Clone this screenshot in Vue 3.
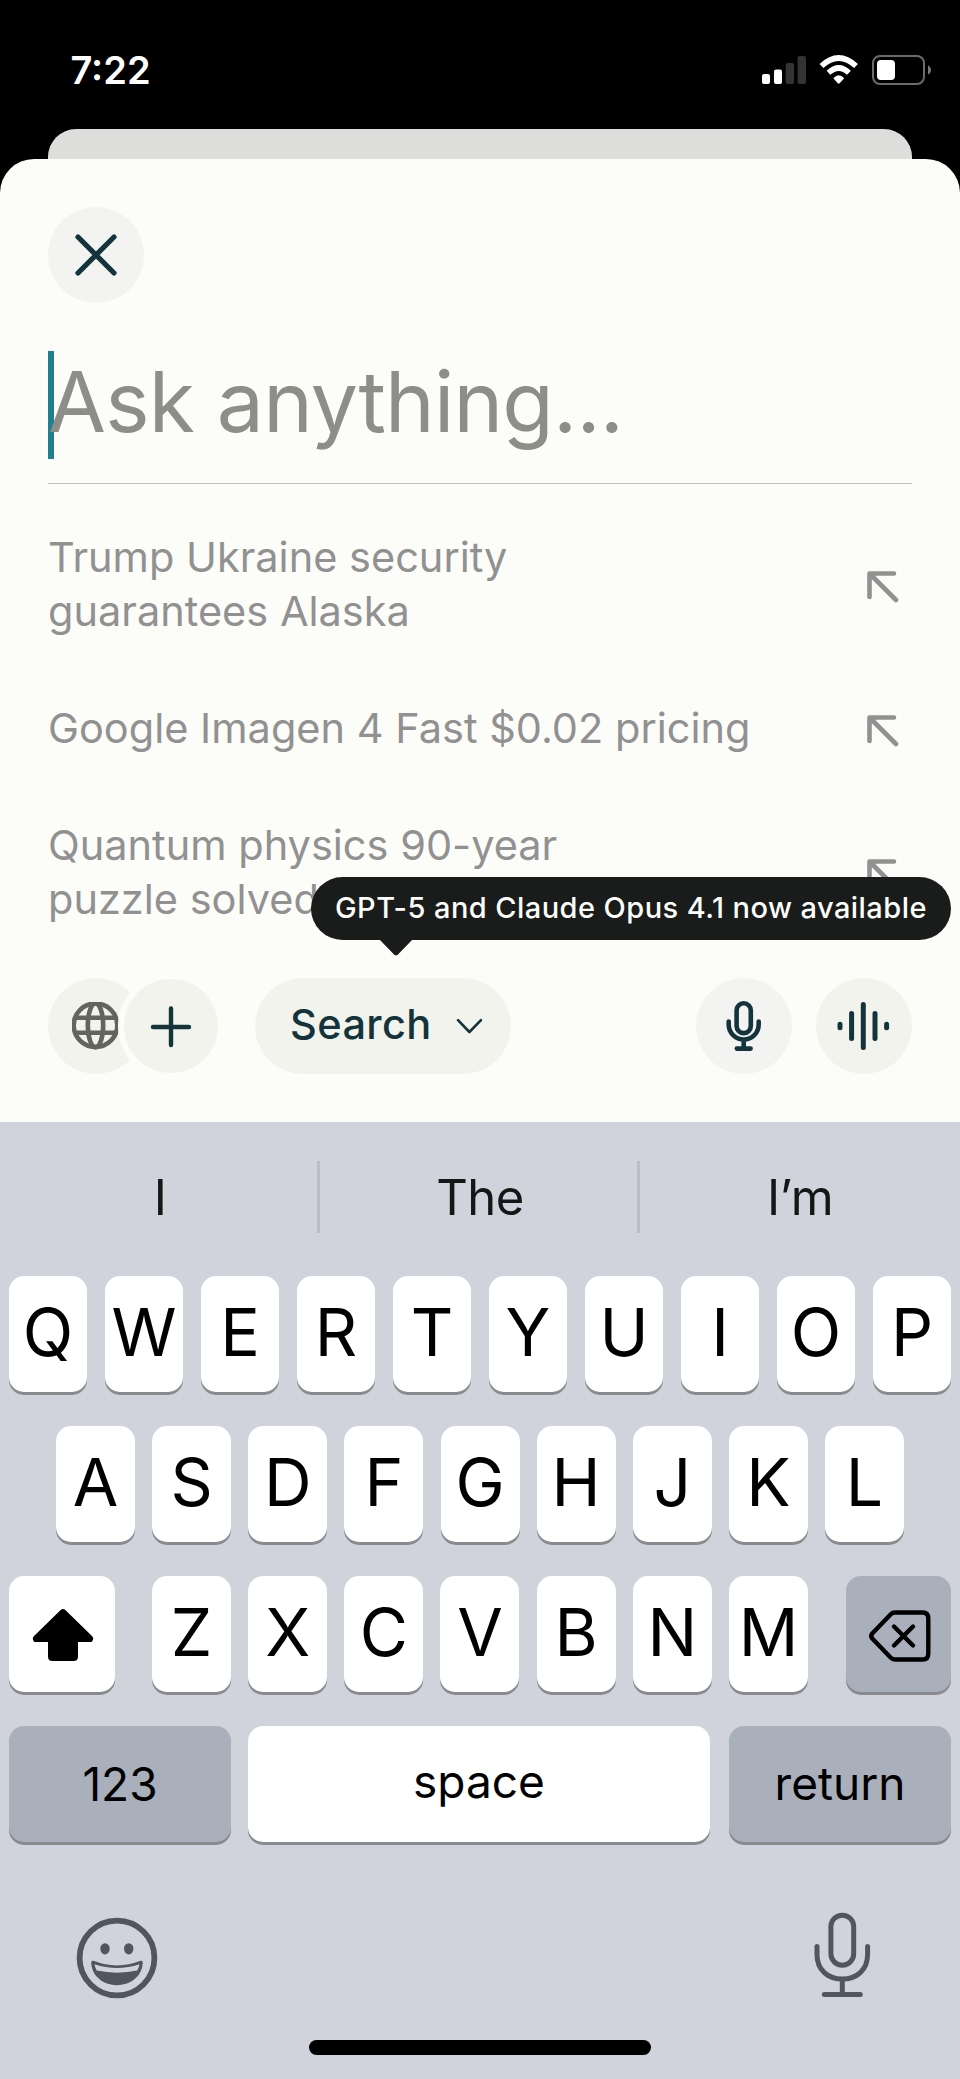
<script setup>
const suggestions = [
  ['Trump Ukraine security', 'guarantees Alaska'],
  ['Google Imagen 4 Fast $0.02 pricing'],
  ['Quantum physics 90-year', 'puzzle solved'],
]
const predictions = ['I', 'The', 'I’m']
const topRow = 'QWERTYUIOP'.split('')
const homeRow = 'ASDFGHJKL'.split('')
const bottomRow = 'ZXCVBNM'.split('')
</script>

<template>
  <div class="phone">
    <header class="status">
      <span class="time">7:22</span>
      <svg class="status-icons" width="172" height="32" viewBox="0 0 172 32">
        <g fill="#fff">
          <rect x="2" y="20" width="8" height="10" rx="2" />
          <rect x="14" y="15.5" width="8" height="14.5" rx="2" />
        </g>
        <g fill="#333">
          <rect x="25.7" y="9" width="8.4" height="21" rx="2" />
          <rect x="37.6" y="2" width="8.4" height="28" rx="2" />
        </g>
        <g fill="none" stroke="#fff" stroke-width="5.6">
          <path d="M61.5 12 Q78.7 -4 96 12" />
          <path d="M68.5 18.7 Q78.7 9.3 89 18.7" />
        </g>
        <path d="M73.3 24.2 Q78.7 18.2 84.2 24.2 L79.6 29.3 Q78.7 30.2 77.8 29.3 Z" fill="#fff" />
        <rect x="113" y="2" width="51" height="28" rx="7" fill="none" stroke="#6b6b6b" stroke-width="2" />
        <rect x="117" y="6" width="18" height="20" rx="4" fill="#fff" />
        <path d="M168 11.5 Q171 13 171 16 Q171 19 168 20.5 Z" fill="#777" />
      </svg>
    </header>
    <div class="back-sheet"></div>

    <main class="sheet">
      <button class="round neutral">
        <svg width="48" height="48" viewBox="0 0 48 48" class="dark" stroke-width="5.2">
          <path d="M6 6 L42 42 M42 6 L6 42" />
        </svg>
      </button>

      <div class="prompt">
        <span class="caret"></span>
        <span class="placeholder">Ask anything...</span>
      </div>

      <ul class="list">
        <li v-for="(lines, i) in suggestions" :key="i">
          <span class="suggestion">
            <span v-for="line in lines" :key="line">{{ line }}</span>
          </span>
          <svg class="arrow" width="32" height="32" viewBox="0 0 32 32">
            <path d="M2.5 26 V2.5 H27 M3 3 L29 29" />
          </svg>
        </li>
      </ul>

      <div class="toolbar">
        <button class="round soft">
          <svg width="48" height="48" viewBox="0 0 48 48" fill="none" stroke="#64645d" stroke-width="4.6">
            <circle cx="23.5" cy="23.3" r="21.8" />
            <ellipse cx="23.5" cy="23.3" rx="7.7" ry="21.8" />
            <path d="M3.5 15.8 H43.5 M3.5 30.8 H43.5" />
          </svg>
        </button>
        <button class="round soft plus">
          <svg width="48" height="48" viewBox="0 0 48 48" class="dark" stroke-width="4.4">
            <path d="M24 6.5 V43 M6 25 H42" />
          </svg>
        </button>
        <button class="pill">
          <span>Search</span>
          <svg width="28" height="18" viewBox="0 0 28 18" class="dark" stroke-width="2.6">
            <path d="M3 3.2 L14.4 15 L26 3.2" />
          </svg>
        </button>
        <button class="round neutral mic">
          <svg width="40" height="54" viewBox="0 0 40 54" class="dark" stroke-width="4.6">
            <rect x="12.6" y="4.3" width="14.2" height="29.8" rx="7.1" />
            <path d="M4.7 22.5 V25.5 A15 15 0 0 0 34.7 25.5 V22.5 M19.7 41 V49 M12.8 49.6 H26.6" />
          </svg>
        </button>
        <button class="round soft">
          <svg width="54" height="50" viewBox="0 0 54 50" class="dark" stroke-width="5">
            <path d="M3 23.2 V26.8 M14.6 12.5 V37.5 M26.3 3.5 V46.5 M38 12.5 V37.5 M49.6 23.2 V26.8" />
          </svg>
        </button>

        <div class="tooltip">
          GPT-5 and Claude Opus 4.1 now available
          <svg class="tip" width="34" height="17" viewBox="0 0 34 17">
            <path d="M0 0 H34 L19 15.4 Q17 17.2 15 15.4 Z" fill="#1a1c1b" />
          </svg>
        </div>
      </div>
    </main>

    <section class="keyboard">
      <div class="predictions">
        <span v-for="word in predictions" :key="word">{{ word }}</span>
      </div>
      <div class="keys">
        <div class="row">
          <kbd v-for="k in topRow" :key="k">{{ k }}</kbd>
        </div>
        <div class="row home">
          <kbd v-for="k in homeRow" :key="k">{{ k }}</kbd>
        </div>
        <div class="row">
          <kbd class="shift">
            <svg width="62" height="54" viewBox="0 0 62 54">
              <path d="M28.4 2.2 Q31 0 33.6 2.2 L60.2 28.2 Q62.5 31.2 59.6 34 H46 V48.5 Q46 53 41.5 53 H20.5 Q16 53 16 48.5 V34 H2.4 Q-0.5 31.2 1.8 28.2 Z" />
            </svg>
          </kbd>
          <div class="row letters">
            <kbd v-for="k in bottomRow" :key="k">{{ k }}</kbd>
          </div>
          <kbd class="grey delete">
            <svg width="62" height="52" viewBox="0 0 62 52" fill="none" stroke="#000" stroke-width="4.4" stroke-linecap="round" stroke-linejoin="round">
              <path d="M26 2.5 H53.5 Q59.3 2.5 59.3 8.3 V43.7 Q59.3 49.5 53.5 49.5 H26 Q23.5 49.5 21.8 47.8 L3.5 28.8 Q1 26 3.5 23.2 L21.8 4.2 Q23.5 2.5 26 2.5 Z" />
              <path d="M25 16.5 L44 35.5 M44 16.5 L25 35.5" />
            </svg>
          </kbd>
        </div>
        <div class="row wide">
          <kbd class="grey side">123</kbd>
          <kbd class="space">space</kbd>
          <kbd class="grey side return">return</kbd>
        </div>
      </div>
      <div class="footer">
        <svg class="emoji" width="82" height="82" viewBox="0 0 82 82">
          <circle cx="41" cy="41" r="37.4" fill="none" stroke="#51555e" stroke-width="5.8" />
          <ellipse cx="29" cy="31.8" rx="4.7" ry="5.6" fill="#51555e" />
          <ellipse cx="52.7" cy="31.8" rx="4.7" ry="5.6" fill="#51555e" />
          <path d="M17.5 43.8 Q41 53 64.5 43.8 Q67 43 66.8 46 C64.5 75.5 17.5 75.5 15.2 46 Q15 43 17.5 43.8 Z" fill="#51555e" />
          <path d="M18.5 47.3 Q41 54.8 63.5 47.3 Q63 50.5 61.3 53.6 Q41 57.7 20.7 53.6 Q19 50.5 18.5 47.3 Z" fill="#d0d3dc" />
        </svg>
        <svg width="60" height="88" viewBox="0 0 60 88" fill="none" stroke="#51555e" stroke-width="5" stroke-linecap="round">
          <rect x="18.9" y="4.2" width="22.8" height="50" rx="11.4" />
          <path d="M5 35.5 V43.5 C5 59 16 68 30.3 68 S55.6 59 55.6 43.5 V35.5 M30.3 68 V83 M12.3 83.5 H48.3" />
        </svg>
      </div>
      <div class="home-bar"></div>
    </section>
  </div>
</template>

<style>
body {
  margin: 0;
  background: #000;
}
</style>

<style scoped>
.phone {
  width: 960px;
  height: 2079px;
  background: #000;
  display: flex;
  flex-direction: column;
  overflow: hidden;
}
* {
  box-sizing: border-box;
}
button {
  border: 0;
  padding: 0;
}
svg {
  display: block;
  flex: none;
}
.status {
  height: 129px;
  flex: none;
  display: flex;
  justify-content: space-between;
  padding: 54px 28px 0 70.5px;
}
.time {
  color: #fff;
  font: 600 38px/32px Inter, sans-serif;
}
.back-sheet {
  height: 60px;
  margin: 0 48px -30px;
  flex: none;
  border-radius: 28px 28px 0 0;
  background: #dddedb;
}
.sheet {
  height: 963px;
  flex: none;
  position: relative;
  display: flex;
  flex-direction: column;
  padding: 48px;
  border-radius: 34px 34px 0 0;
  background: #fcfdf9;
  font-family: Inter, sans-serif;
}
.round {
  width: 96px;
  height: 96px;
  flex: none;
  border-radius: 50%;
  display: flex;
  align-items: center;
  justify-content: center;
}
.neutral {
  background: #f3f3f2;
}
.soft {
  background: #f2f3ed;
}
.dark {
  fill: none;
  stroke: #13343b;
  stroke-linecap: round;
  stroke-linejoin: round;
}
.prompt {
  position: relative;
  flex: none;
  height: 133px;
  margin-top: 48px;
  border-bottom: 1px solid #bfc0bd;
}
.caret {
  position: absolute;
  left: 0;
  top: 0;
  width: 6px;
  height: 108px;
  background: #20808d;
}
.placeholder {
  position: relative;
  display: block;
  font-size: 84px;
  line-height: 101px;
  letter-spacing: -0.8px;
  color: #8d8e88;
  white-space: nowrap;
}
.list {
  list-style: none;
  margin: 46px 0 0;
  padding: 0 13px 0 0;
  display: flex;
  flex-direction: column;
  gap: 63px;
}
.list li {
  display: flex;
  align-items: center;
  justify-content: space-between;
}
.suggestion {
  display: flex;
  flex-direction: column;
  font-size: 41.5px;
  line-height: 54px;
  letter-spacing: 0;
  color: #919191;
  white-space: nowrap;
}
.arrow {
  margin-top: 5px;
  fill: none;
  stroke: #919191;
  stroke-width: 4.6;
  stroke-linecap: round;
  stroke-linejoin: round;
}
.toolbar {
  position: relative;
  margin-top: auto;
  display: flex;
  align-items: center;
}
.plus {
  width: 106px;
  height: 106px;
  margin: -5px 0 -5px -26px;
  border: 6px solid #fcfdf9;
}
.pill {
  width: 256px;
  height: 96px;
  margin-left: 31px;
  padding: 0 28px 4px 35px;
  border-radius: 48px;
  background: #f2f3ed;
  display: flex;
  align-items: center;
  justify-content: space-between;
  font: 500 41.5px/54px Inter, sans-serif;
  letter-spacing: 0.4px;
  color: #13343b;
}
.pill svg {
  margin-top: 4px;
}
.mic {
  margin: 0 24px 0 auto;
}
.tooltip {
  position: absolute;
  left: 263px;
  top: -101px;
  width: 640px;
  height: 63px;
  padding-left: 24px;
  border-radius: 32px;
  background: #1a1c1b;
  color: #fcfdf9;
  font-size: 29px;
  font-weight: 500;
  line-height: 62px;
  letter-spacing: 0.44px;
  white-space: nowrap;
}
.tip {
  position: absolute;
  left: 68px;
  top: 62px;
}
.keyboard {
  flex: 1;
  display: flex;
  flex-direction: column;
  background: #d0d3dc;
  font-family: Inter, sans-serif;
  color: #000;
}
.predictions {
  height: 154px;
  flex: none;
  display: grid;
  grid-template-columns: repeat(3, 320px);
  padding: 39px 0 43px;
}
.predictions span {
  display: flex;
  align-items: center;
  justify-content: center;
  font-size: 49px;
  letter-spacing: -0.6px;
  color: #161616;
}
.predictions span + span {
  box-shadow: -3px 0 #bbbdc3;
}
.keys {
  display: flex;
  flex-direction: column;
  gap: 34px;
  padding: 0 9px;
}
.row {
  display: flex;
  justify-content: space-between;
}
.home {
  padding: 0 47px;
}
.letters {
  width: 656px;
  margin-left: -1px;
}
kbd {
  width: 78px;
  height: 116px;
  display: flex;
  align-items: center;
  justify-content: center;
  padding-bottom: 4px;
  border-radius: 15px;
  background: #fff;
  box-shadow: 0 3px #898a8d;
  font: 400 66px/80px Inter, sans-serif;
}
.home kbd,
.letters kbd {
  width: 79px;
}
kbd.grey {
  background: #a9afbb;
}
.shift {
  width: 106px;
  padding: 2px 0 0 1px;
}
.delete {
  width: 105px;
  padding: 3px 0 0 3px;
}
.wide kbd {
  font-size: 46px;
}
.wide .side {
  width: 222px;
  padding-bottom: 0;
}
.wide .space {
  width: 462px;
  margin-left: -2px;
  padding-bottom: 6px;
}
.wide .return {
  padding-bottom: 2px;
}
.footer {
  display: flex;
  justify-content: space-between;
  align-items: center;
  padding: 69px 88px 0 75.5px;
}
.emoji {
  margin-top: 6px;
}
.home-bar {
  width: 342px;
  height: 15px;
  margin: auto auto 24px;
  border-radius: 8px;
  background: #000;
}
</style>
